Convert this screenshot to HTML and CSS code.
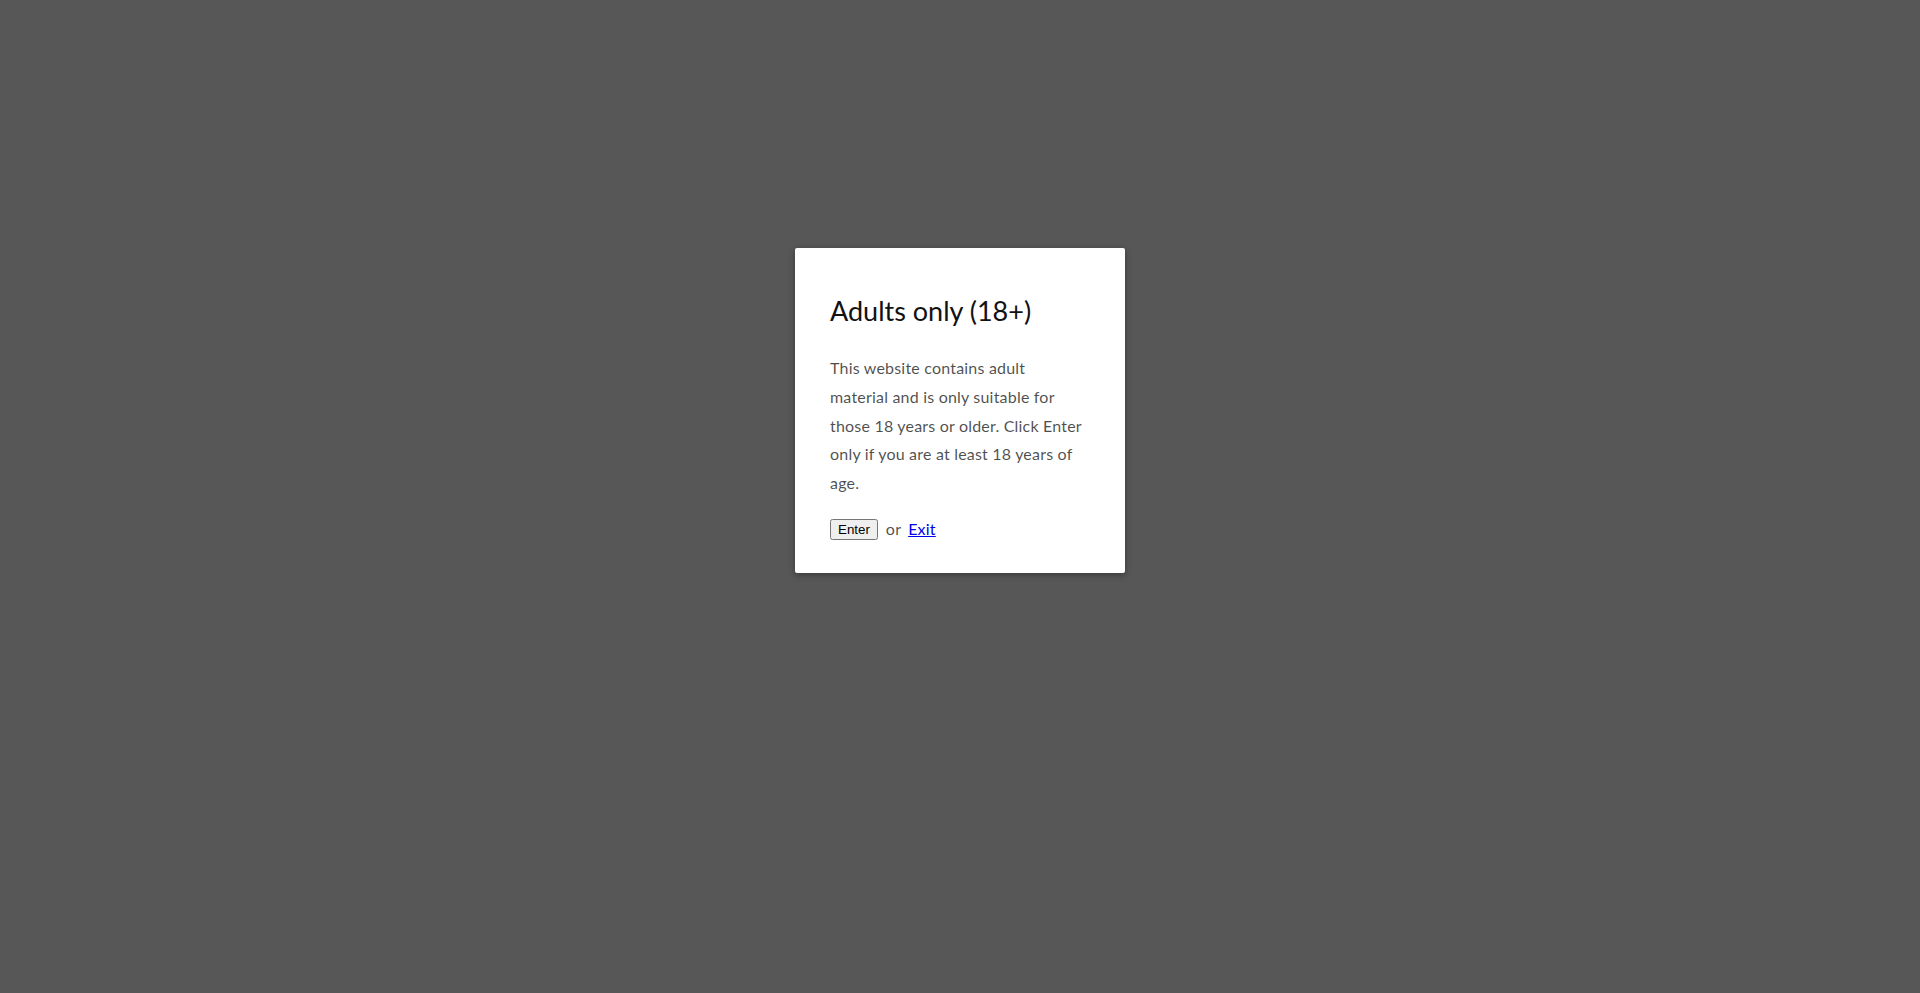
FILE: index.html
```html
<!DOCTYPE html>
<html lang="en">
<head>
<meta charset="utf-8">
<title>Age verification</title>
<link rel="stylesheet" href="styles.css">
</head>
<body>
<div class="overlay">
  <div class="modal">
    <h2 class="title">Adults only (18+)</h2>
    <p class="text">This website contains adult material and is only suitable for those 18 years or older. Click Enter only if you are at least 18 years of age.</p>
    <div class="actions">
      <button class="enter" type="button">Enter</button>
      <span class="or">or</span>
      <a class="exit" href="#">Exit</a>
    </div>
  </div>
</div>
</body>
</html>
```
FILE: styles.css
```css
html, body {
  margin: 0;
  height: 100%;
}
body {
  background: #ffffff;
  font-family: Lato, "Open Sans", sans-serif;
}
.overlay {
  min-height: 100%;
  background: #575757;
  display: flex;
  justify-content: center;
  align-items: flex-start;
  padding-top: 248px;
  box-sizing: border-box;
}
.modal {
  width: 330px;
  box-sizing: border-box;
  background: #ffffff;
  border-radius: 2px;
  box-shadow: 0 2px 6px rgba(0, 0, 0, 0.35);
  padding: 35px 39px 29px 35px;
}
.title {
  margin: 8px 0 24px;
  font-weight: 400;
  font-size: 27px;
  line-height: 39px;
  letter-spacing: 0;
  color: #121212;
  white-space: nowrap;
}
.text {
  margin: 0 0 17px;
  font-size: 16px;
  line-height: 28.8px;
  letter-spacing: 0.2px;
  color: rgba(18, 18, 18, 0.75);
}
.actions {
  display: flex;
  align-items: center;
  font-size: 16px;
  line-height: 28.8px;
  letter-spacing: 0.2px;
}
.enter {
  font-family: "Liberation Sans", Arial, sans-serif;
  font-size: 13.333px;
  letter-spacing: 0;
}
.or {
  margin: 0 7px 0 8px;
  color: rgba(18, 18, 18, 0.75);
}
.exit {
  color: #0000ee;
}
```
